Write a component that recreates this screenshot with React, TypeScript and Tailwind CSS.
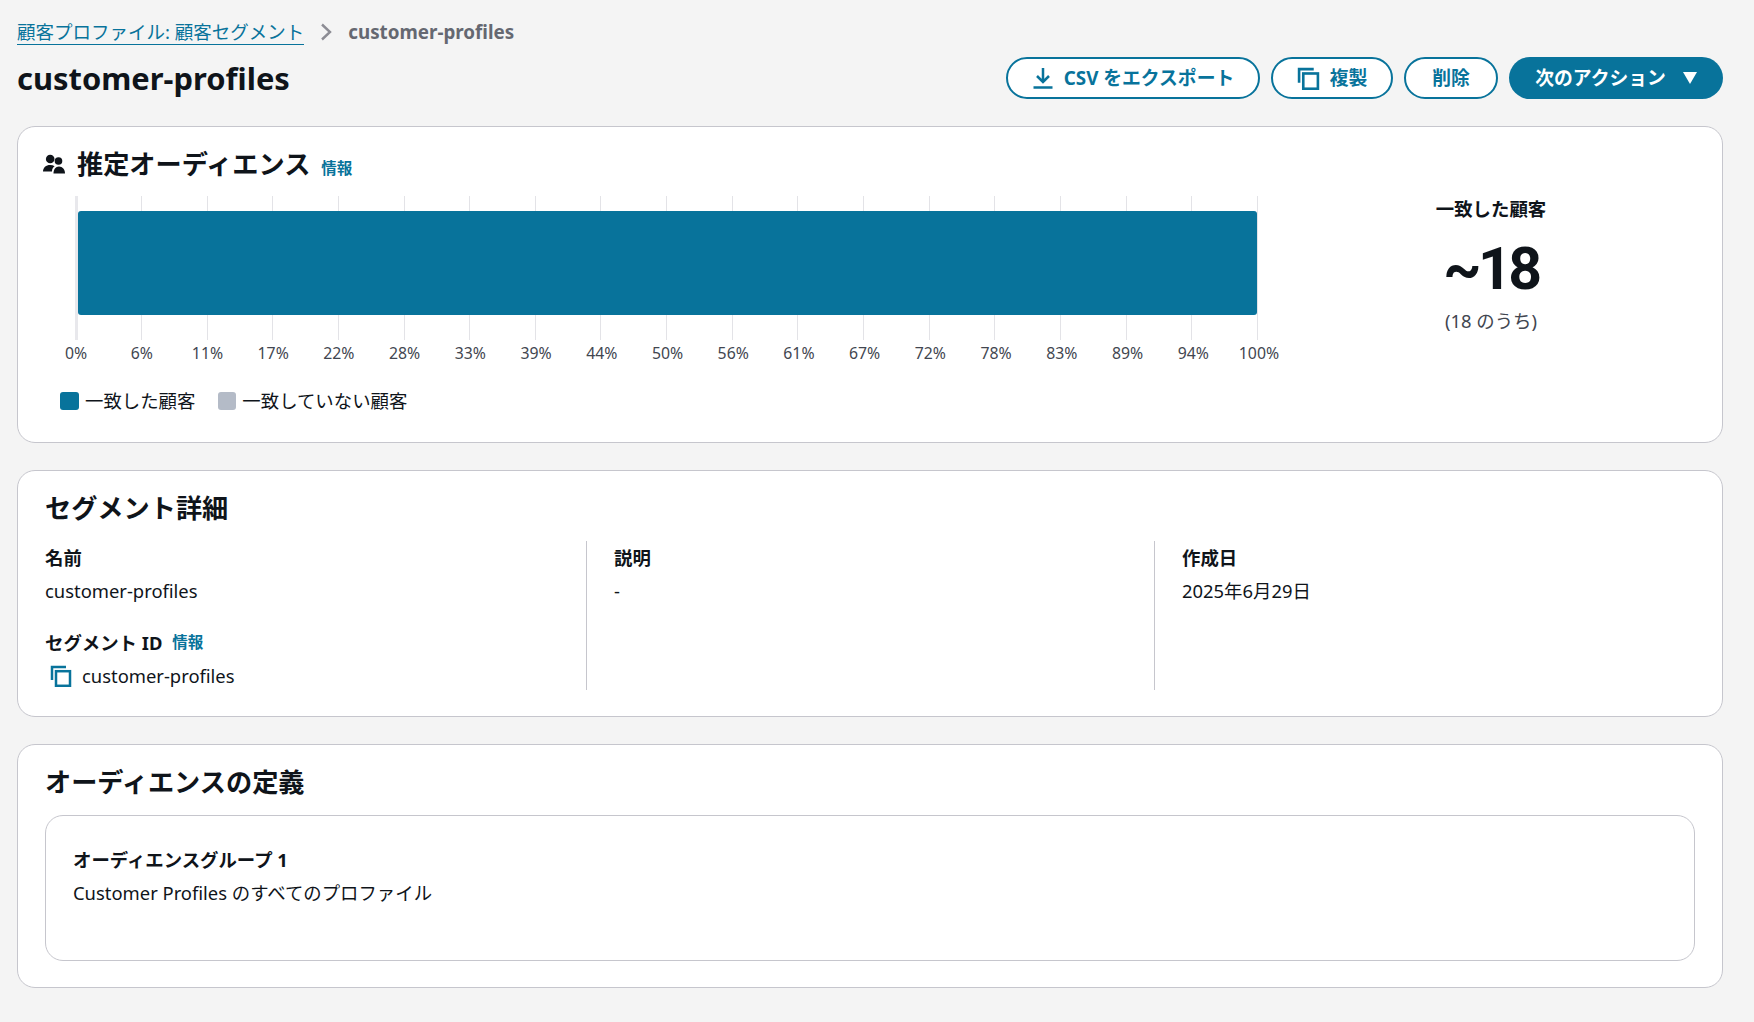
const ticks = ['0%', '6%', '11%', '17%', '22%', '28%', '33%', '39%', '44%', '50%', '56%', '61%', '67%', '72%', '78%', '83%', '89%', '94%', '100%'];

function CopyIcon({ className }: { className?: string }) {
  return (
    <svg viewBox="0 0 22 22" fill="none" stroke="currentColor" strokeWidth="2.5" className={className}>
      <path d="M2 15V2h14" />
      <rect x="6" y="6.2" width="14" height="14.6" />
    </svg>
  );
}

function DownloadIcon() {
  return (
    <svg viewBox="0 0 22 22" fill="none" stroke="currentColor" strokeWidth="2.5" className="w-[22px] h-[22px]">
      <path d="M11 1v13.500M5 9l6 6 6-6M1.500 20.500h19" />
    </svg>
  );
}

function UsersIcon() {
  return (
    <svg viewBox="0 0 22 20" fill="currentColor" className="w-[22px] h-[20px] -ml-[2px]">
      <circle cx="7.200" cy="5" r="4.300" />
      <circle cx="15.500" cy="7" r="3.800" />
      <path d="M0 17.500c0-3.800 3-6.500 7.200-6.500 1.700 0 3.200.4 4.400 1.200C9.800 13.400 9 15 9 17.500z" />
      <path d="M10.500 19.500c0-4 2-7 5.500-7s6 3 6 7z" />
    </svg>
  );
}

function Field({ label, children }: { label: React.ReactNode; children: React.ReactNode }) {
  return (
    <div>
      <div className="font-bold h-[33px] leading-[27px]">{label}</div>
      <div className="h-[27px] leading-[27px]">{children}</div>
    </div>
  );
}

function Info() {
  return <span className="text-[15.5px] font-bold text-[#08739b]">情報</span>;
}

function Card({ className, children }: { className: string; children: React.ReactNode }) {
  return (
    <section className={`ml-[17px] mr-[31px] bg-white border border-[#c6c6cd] rounded-[18px] ${className}`}>
      {children}
    </section>
  );
}

export default function App() {
  return (
    <div className="min-h-[1022px] bg-[#f4f4f4] text-[18.4px] text-[#0f141a] font-['Noto_Sans','Noto_Sans_CJK_JP',sans-serif] overflow-hidden">
      {/* Header */}
      <div className="h-[126px] pl-[17px] pr-[31px] pt-[19px]">
        <div className="flex items-center h-[26px]">
          <a className="text-[18.5px] text-[#08739b] border-b border-[#08739b] leading-[25px]">顧客プロファイル: 顧客セグメント</a>
          <svg viewBox="0 0 12 18" fill="none" stroke="#8c8c94" strokeWidth="2.4" className="w-[12px] h-[18px] mx-[16px]">
            <path d="M2 1.500 10 9l-8 7.500" />
          </svg>
          <span className="font-bold text-[#656871] text-[18.8px]">customer-profiles</span>
        </div>
        <div className="flex items-center justify-between mt-[12px]">
          <h1 className="text-[30.9px] font-bold leading-[42px]">customer-profiles</h1>
          <div className="flex gap-[11px] font-bold text-[18.8px] text-[#08739b]">
            <button className="w-[254px] h-[42px] border-2 border-[#08739b] rounded-full bg-white flex items-center justify-center gap-[10px]">
              <DownloadIcon />
              <span>CSV をエクスポート</span>
            </button>
            <button className="w-[122px] h-[42px] border-2 border-[#08739b] rounded-full bg-white flex items-center justify-center gap-[10px]">
              <CopyIcon className="w-[23px] h-[23px]" />
              <span>複製</span>
            </button>
            <button className="w-[94px] h-[42px] border-2 border-[#08739b] rounded-full bg-white">削除</button>
            <button className="w-[214px] h-[42px] rounded-full bg-[#08739b] text-white flex items-center justify-center gap-[17px]">
              <span>次のアクション</span>
              <svg viewBox="0 0 14 12" fill="white" className="w-[14px] h-[12px]">
                <path d="M0 0h14L7 12z" />
              </svg>
            </button>
          </div>
        </div>
      </div>

      {/* Estimated audience */}
      <Card className="h-[317px] mb-[27px] pt-[20px] px-[27px]">
        <div className="flex items-center h-[34px]">
          <UsersIcon />
          <h2 className="ml-[12px] text-[26.2px] font-semibold leading-[34px]">推定オーディエンス</h2>
          <span className="ml-[11px] mt-[5px]"><Info /></span>
        </div>
        <div className="flex">
          <div className="w-[1331px]">
            {/* chart */}
            <div className="ml-[30px] w-[1183px] mt-[15px] h-[144px] relative border-l-[3px] border-[#e8e8ec] flex justify-between">
              {ticks.slice(1).map((t, i) => (
                <div key={t} className={`w-px h-full bg-[#e3e3e7] ${i === 0 ? 'ml-[63px]' : ''}`} />
              ))}
              <div className="absolute left-0 top-[15px] w-[1179px] h-[104px] rounded-[3px] bg-[#08739b]" />
            </div>
            <div className="ml-[31px] w-[1183px] flex justify-between mt-[2px] text-[15.8px] leading-[22px] text-[#424650]">
              {ticks.map((t) => (
                <div key={t} className="w-0 flex justify-center">
                  <span>{t}</span>
                </div>
              ))}
            </div>
            <div className="flex items-center mt-[24px] ml-[15px] h-[26px]">
              <span className="w-[19px] h-[18px] rounded-[3px] bg-[#08739b]" />
              <span className="ml-[6px]">一致した顧客</span>
              <span className="ml-[23px] w-[18px] h-[18px] rounded-[3px] bg-[#b4bbc7]" />
              <span className="ml-[6px]">一致していない顧客</span>
            </div>
          </div>
          <div className="w-[210px] ml-[10px] flex flex-col items-center">
            <div className="font-bold leading-[26px] mt-[15px]">一致した顧客</div>
            <div className="text-[59px] font-bold leading-[70px] mt-[12px] tracking-[-3.5px] font-['Roboto',sans-serif]">~18</div>
            <div className="text-[#424650] leading-[26px] mt-[4px]">(18 のうち)</div>
          </div>
        </div>
      </Card>

      {/* Segment details */}
      <Card className="h-[247px] mb-[27px] pt-[20px] px-[27px]">
        <h2 className="text-[26.2px] font-semibold leading-[34px]">セグメント詳細</h2>
        <div className="flex mt-[16px] h-[149px]">
          <div className="w-[542px] pt-[3px] border-r border-[#c6c6cd]">
            <Field label="名前">customer-profiles</Field>
            <div className="mt-[25px]">
              <Field label={<span className="flex items-center gap-[10px]">セグメント ID <Info /></span>}>
                <span className="flex items-center gap-[10px] pl-[5px]">
                  <CopyIcon className="w-[22px] h-[22px] text-[#08739b]" />
                  customer-profiles
                </span>
              </Field>
            </div>
          </div>
          <div className="w-[568px] pl-[27px] pt-[3px] border-r border-[#c6c6cd]">
            <Field label="説明">-</Field>
          </div>
          <div className="pl-[27px] pt-[3px]">
            <Field label="作成日">2025年6月29日</Field>
          </div>
        </div>
      </Card>

      {/* Audience definition */}
      <Card className="h-[244px] pt-[20px] px-[27px]">
        <h2 className="text-[26.2px] font-semibold leading-[34px]">オーディエンスの定義</h2>
        <div className="mt-[16px] h-[146px] border border-[#c6c6cd] rounded-[18px] pl-[27px] pt-[30px]">
          <div className="font-bold h-[33px] leading-[27px]">オーディエンスグループ 1</div>
          <div className="leading-[27px]">Customer Profiles のすべてのプロファイル</div>
        </div>
      </Card>
    </div>
  );
}
